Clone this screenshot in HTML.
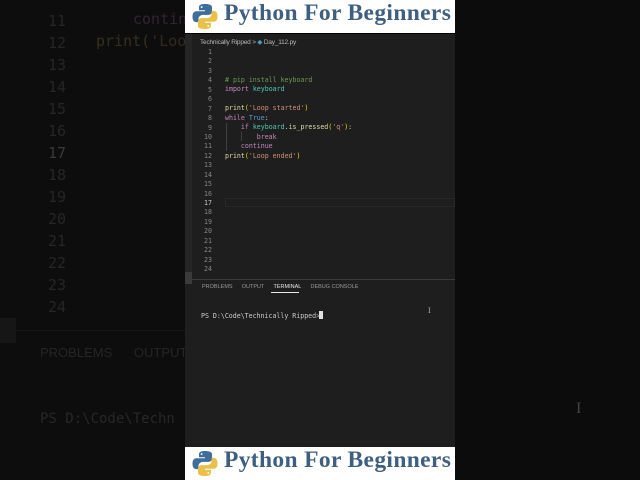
<!DOCTYPE html>
<html><head><style>
*{margin:0;padding:0;box-sizing:border-box}
body{width:640px;height:480px;background:#0c0c0c;overflow:hidden;position:relative;font-family:"Liberation Sans",sans-serif}
.abs{position:absolute;white-space:pre}
.bg{font-family:"DejaVu Sans Mono","Liberation Mono",monospace;font-size:15px;color:#262626}
.mono{font-family:"DejaVu Sans Mono","Liberation Mono",monospace;font-size:6.6px}
.ln{color:#858585;text-align:right;width:20px;left:192px}
.banner{position:absolute;left:185px;width:270px;height:33px;background:#fff}
.banner span{position:absolute;left:39px;top:0px;font-family:"Liberation Serif",serif;font-weight:bold;font-size:23.5px;letter-spacing:0.35px;color:#3e5f80;white-space:nowrap}
.banner svg{position:absolute;left:6px;top:3px}
</style></head><body>
<div class="abs" style="left:0;top:0;width:185px;height:480px;background:#0d0d0d"></div>
<div class="abs" style="left:0;top:318px;width:16px;height:25px;background:#161616"></div>
<div class="abs" style="left:16px;top:330px;width:169px;height:1px;background:#171717"></div>
<div class="abs bg" style="left:48px;top:10px;line-height:22px">11
12
13
14
15
16
<span style="color:#3a3a3a">17</span>
18
19
20
21
22
23
24</div>
<div class="abs bg" style="left:96px;top:32px;color:#343020">print(<span style="color:#342a20">'Loo</span></div>
<div class="abs bg" style="left:133px;top:10px;color:#342234">contin</div>
<div class="abs" style="left:40px;top:345px;font-size:13px;color:#252525">PROBLEMS&nbsp;&nbsp;&nbsp;&nbsp;&nbsp;&nbsp;OUTPUT</div>
<div class="abs bg" style="left:40px;top:411px;font-size:14px;color:#272727">PS D:\Code\Techn</div>
<div class="abs" style="left:576px;top:400px;color:#444;font-size:16px;font-family:'Liberation Serif',serif">I</div>

<div class="abs" style="left:185px;top:33px;width:270px;height:414px;background:#1e1e1e"></div>
<div class="abs" style="left:185px;top:33px;width:270px;height:1px;background:#000"></div>
<div class="abs" style="left:185px;top:34px;width:7px;height:245px;background:#252526"></div>
<div class="abs" style="left:185px;top:272px;width:7px;height:12px;background:#3a3a3a"></div>
<div class="abs" style="left:200px;top:38px;font-size:6.5px;color:#b8b8b8;letter-spacing:-0.2px">Technically Ripped &gt; <span style="color:#519aba">◆</span> Day_112.py</div>
<div class="abs mono ln" style="top:48px;line-height:9.43px">1
2
3
4
5
6
7
8
9
10
11
12
13
14
15
16
<span style="color:#c6c6c6">17</span>
18
19
20
21
22
23
24</div>
<div class="abs" style="left:225px;top:198px;width:230px;height:9px;border:1px solid #282828"></div>
<div class="abs" style="left:226px;top:123px;width:1px;height:28px;background:#404040"></div>
<div class="abs" style="left:241px;top:132px;width:1px;height:9px;background:#404040"></div>
<div class="abs mono" style="left:225px;top:76px;line-height:9.43px;color:#d4d4d4"><span style="color:#6a9955"># pip install keyboard</span>
<span style="color:#c586c0">import</span> <span style="color:#4ec9b0">keyboard</span>

<span style="color:#dcdcaa">print</span><span style="color:#ffd700">(</span><span style="color:#ce9178">'Loop started'</span><span style="color:#ffd700">)</span>
<span style="color:#c586c0">while</span> <span style="color:#569cd6">True</span>:
    <span style="color:#c586c0">if</span> <span style="color:#4ec9b0">keyboard</span>.<span style="color:#dcdcaa">is_pressed</span><span style="color:#ffd700">(</span><span style="color:#ce9178">'q'</span><span style="color:#ffd700">)</span>:
        <span style="color:#c586c0">break</span>
    <span style="color:#c586c0">continue</span>
<span style="color:#dcdcaa">print</span><span style="color:#ffd700">(</span><span style="color:#ce9178">'Loop ended'</span><span style="color:#ffd700">)</span></div>
<div class="abs" style="left:192px;top:279px;width:263px;height:1px;background:#3a3a3a"></div>
<div class="abs" style="left:202px;top:284px;font-size:5.5px;color:#999">PROBLEMS&nbsp;&nbsp;&nbsp;&nbsp;&nbsp;&nbsp;OUTPUT&nbsp;&nbsp;&nbsp;&nbsp;&nbsp;&nbsp;<span style="color:#e7e7e7">TERMINAL</span>&nbsp;&nbsp;&nbsp;&nbsp;&nbsp;&nbsp;DEBUG CONSOLE</div>
<div class="abs" style="left:271px;top:292px;width:28px;height:1px;background:#e7e7e7"></div>
<div class="abs mono" style="left:201px;top:312px;color:#ccc">PS D:\Code\Technically Ripped&gt; </div>
<div class="abs" style="left:319px;top:311px;width:4px;height:8px;background:#e0e0e0"></div>
<div class="abs" style="left:428px;top:306px;color:#aaa;font-size:8px;font-family:'Liberation Serif',serif">I</div>

<div class="banner" style="top:0"><svg width="28" height="27" viewBox="0 0 28 28"><path d="M13.8 1c-6 0-6 2.6-6 3.4V7.5h6.2v1H5.2C3 8.5 1 10 1 14s1.6 5.8 4 5.8h2.2v-3c0-2.6 2.2-4.5 4.5-4.5h6c2 0 3.6-1.6 3.6-3.6V4.4C21.3 2.4 19 1 13.8 1z" fill="#3d6e9c"/><circle cx="10.5" cy="4.2" r="1" fill="#fff"/><path d="M14.2 27c6 0 6-2.6 6-3.4v-3.1H14v-1h8.8c2.2 0 4.2-1.5 4.2-5.5s-1.6-5.8-4-5.8h-2.2v3c0 2.6-2.2 4.5-4.5 4.5h-6c-2 0-3.6 1.6-3.6 3.6v4.3C6.7 25.6 9 27 14.2 27z" fill="#e8c04a"/><circle cx="17.5" cy="23.8" r="1" fill="#fff"/></svg><span>Python For Beginners</span></div>
<div class="banner" style="top:447px"><svg width="28" height="27" viewBox="0 0 28 28"><path d="M13.8 1c-6 0-6 2.6-6 3.4V7.5h6.2v1H5.2C3 8.5 1 10 1 14s1.6 5.8 4 5.8h2.2v-3c0-2.6 2.2-4.5 4.5-4.5h6c2 0 3.6-1.6 3.6-3.6V4.4C21.3 2.4 19 1 13.8 1z" fill="#3d6e9c"/><circle cx="10.5" cy="4.2" r="1" fill="#fff"/><path d="M14.2 27c6 0 6-2.6 6-3.4v-3.1H14v-1h8.8c2.2 0 4.2-1.5 4.2-5.5s-1.6-5.8-4-5.8h-2.2v3c0 2.6-2.2 4.5-4.5 4.5h-6c-2 0-3.6 1.6-3.6 3.6v4.3C6.7 25.6 9 27 14.2 27z" fill="#e8c04a"/><circle cx="17.5" cy="23.8" r="1" fill="#fff"/></svg><span>Python For Beginners</span></div>
</body></html>
